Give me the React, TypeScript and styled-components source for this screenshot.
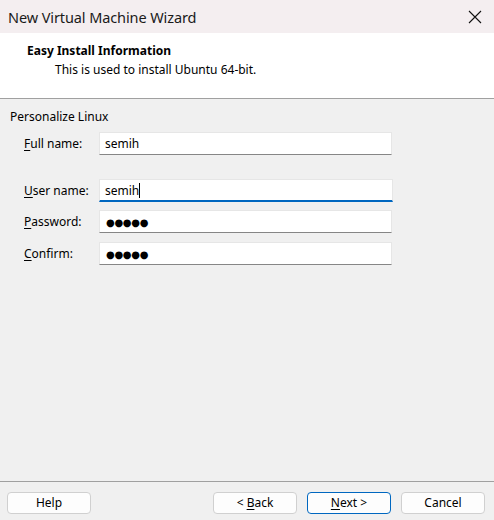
import React from "react";
import styled, { createGlobalStyle } from "styled-components";

const Global = createGlobalStyle`
  html, body { margin: 0; padding: 0; }
  body {
    width: 494px;
    height: 520px;
    overflow: hidden;
    font-family: "Noto Sans", "Liberation Sans", sans-serif;
    font-size: 12px;
    color: #000;
    background: #f0f0f0;
  }
`;

const Window = styled.div`
  width: 494px;
  height: 520px;
  display: flex;
  flex-direction: column;
  background: #f0f0f0;
`;

const TitleBar = styled.div`
  height: 33px;
  flex: none;
  display: flex;
  align-items: center;
  justify-content: space-between;
  background: #f4eef0;
  padding-left: 8px;
`;

const TitleText = styled.span`
  font-size: 14.5px;
  color: #1a1a1a;
  letter-spacing: -0.1px;
`;

const CloseButton = styled.div`
  width: 39px;
  height: 33px;
  display: flex;
  align-items: center;
  justify-content: center;
`;

const Header = styled.div`
  flex: none;
  background: #fff;
  border-bottom: 1px solid #a0a0a0;
  display: flex;
  flex-direction: column;
  padding: 9px 0 0 27px;
  box-sizing: border-box;
  height: 66px;
`;

const HeaderTitle = styled.div`
  font-weight: bold;
  font-size: 12px;
  line-height: 17px;
`;

const HeaderSub = styled.div`
  padding-left: 28px;
  margin-top: 2px;
  line-height: 17px;
`;

const Body = styled.div`
  flex: 1;
  padding: 9px 0 0 10px;
  display: flex;
  flex-direction: column;
`;

const GroupLabel = styled.div`
  line-height: 17px;
`;

const Form = styled.div`
  margin-top: 7px;
  padding-left: 14px;
  display: grid;
  grid-template-columns: 75px 294px;
  align-items: center;
`;

const Label = styled.label<{ $gap?: number }>`
  margin-top: ${(p) => p.$gap ?? 0}px;
  line-height: 17px;
`;

const Field = styled.div<{ $gap?: number; $focused?: boolean }>`
  margin-top: ${(p) => p.$gap ?? 0}px;
  height: 23px;
  box-sizing: border-box;
  background: #fff;
  border: 1px solid #e6e6e6;
  border-bottom: ${(p) => (p.$focused ? "2px solid #0067c0" : "1px solid #868686")};
  width: ${(p) => (p.$focused ? 294 : 293)}px;
  display: flex;
  align-items: center;
  padding-left: 5px;
  font-size: 12px;
`;

const Caret = styled.span`
  display: inline-block;
  width: 1px;
  height: 15px;
  background: #000;
`;

const Dots = styled.span`
  font-size: 10px;
  letter-spacing: -0.3px;
  font-family: "DejaVu Sans", sans-serif;
  padding-top: 1px;
  padding-left: 1px;
`;

const Footer = styled.div`
  flex: none;
  border-top: 1px solid #a0a0a0;
  display: flex;
  align-items: flex-start;
  padding: 10px 9px 0 7px;
  height: 28px;
`;

const Spacer = styled.div`
  flex: 1;
`;

const Button = styled.button<{ $primary?: boolean }>`
  width: 84px;
  height: 22px;
  box-sizing: border-box;
  border: 1px solid ${(p) => (p.$primary ? "#0067c0" : "#d0d0d0")};
  border-radius: 4px;
  background: #fdfdfd;
  font-family: "Noto Sans", "Liberation Sans", sans-serif;
  font-size: 12px;
  color: #000;
  padding: 0;
  margin-left: 10px;
  line-height: 18px;
  &:first-child { margin-left: 0; }
`;

const U = styled.span`
  text-decoration: underline;
  text-underline-offset: 2px;
`;

export default function App() {
  return (
    <>
      <Global />
      <Window>
        <TitleBar>
          <TitleText>New Virtual Machine Wizard</TitleText>
          <CloseButton>
            <svg width="14" height="14" viewBox="0 0 14 14">
              <path d="M1 1 L13 13 M13 1 L1 13" stroke="#111" strokeWidth="1.1" />
            </svg>
          </CloseButton>
        </TitleBar>
        <Header>
          <HeaderTitle>Easy Install Information</HeaderTitle>
          <HeaderSub>This is used to install Ubuntu 64-bit.</HeaderSub>
        </Header>
        <Body>
          <GroupLabel>Personalize Linux</GroupLabel>
          <Form>
            <Label><U>F</U>ull name:</Label>
            <Field>semih</Field>
            <Label $gap={24}><U>U</U>ser name:</Label>
            <Field $gap={24} $focused>semih<Caret /></Field>
            <Label $gap={8}><U>P</U>assword:</Label>
            <Field $gap={8}><Dots>●●●●●</Dots></Field>
            <Label $gap={9}><U>C</U>onfirm:</Label>
            <Field $gap={9}><Dots>●●●●●</Dots></Field>
          </Form>
        </Body>
        <Footer>
          <Button>Help</Button>
          <Spacer />
          <Button>&lt; <U>B</U>ack</Button>
          <Button $primary><U>N</U>ext &gt;</Button>
          <Button>Cancel</Button>
        </Footer>
      </Window>
    </>
  );
}
